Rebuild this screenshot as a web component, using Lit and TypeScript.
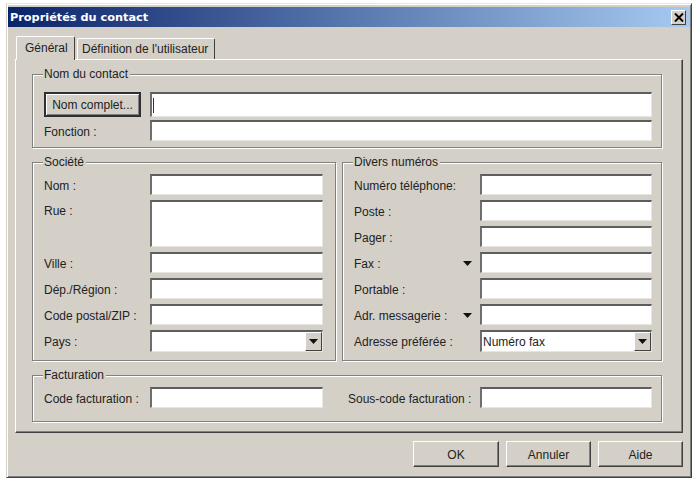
import { LitElement, html, css } from 'lit';
import { customElement } from 'lit/decorators.js';

const arrow = html`<svg width="9" height="5" viewBox="0 0 9 5"><path d="M0 0h9L4.5 5z" fill="#111" /></svg>`;

@customElement('app-root')
export class AppRoot extends LitElement {
  static styles = css`
    :host {
      display: block;
      width: 695px;
      height: 481px;
      box-sizing: border-box;
      padding: 3px 3px 3px 6px;
      background: #fff;
      font-family: 'Liberation Sans', Arial, sans-serif;
      font-size: 12px;
      color: #222;
    }
    * {
      box-sizing: border-box;
    }
    .window {
      height: 475px;
      padding: 3px 1px 1px;
      background: #d4d0c8;
      border: 1px solid;
      border-color: #e8e6e0 #404040 #404040 #d4d0c8;
      box-shadow: inset 1px 1px 0 #fff, inset -1px -1px 0 #808080;
    }
    .title {
      display: flex;
      align-items: center;
      justify-content: space-between;
      height: 20px;
      padding: 0 4px 0 2px;
      background: linear-gradient(90deg, #0a246a, #a6caf0);
      color: #fff;
      font-family: 'DejaVu Sans', sans-serif;
      font-size: 11.3px;
      font-weight: bold;
    }
    .close {
      display: flex;
      align-items: center;
      justify-content: center;
      width: 15px;
      height: 15px;
      background: #d4d0c8;
      border: 1px solid;
      border-color: #fff #404040 #404040 #fff;
    }
    .body {
      padding: 9px 7px 0;
    }
    .tabs {
      display: flex;
      align-items: flex-end;
      gap: 2px;
      height: 23px;
      padding-left: 1px;
    }
    .tab {
      position: relative;
      height: 21px;
      padding: 3px 6px 0 4px;
      background: #d4d0c8;
      border: solid;
      border-width: 1px 1px 0 1px;
      border-color: #fff #404040 #fff #fff;
      border-radius: 2px 2px 0 0;
      white-space: nowrap;
    }
    .tab.active {
      z-index: 1;
      width: 59px;
      height: 24px;
      margin-bottom: -1px;
      padding: 4px 0 0 8px;
    }
    .panel {
      height: 374px;
      padding: 14px 20px 0 16px;
      background: #d4d0c8;
      border: 1px solid;
      border-color: #fff #404040 #404040 #fff;
      box-shadow: inset -1px -1px 0 #808080;
    }
    .group {
      position: relative;
      border: 1px solid #808080;
      box-shadow: 1px 1px 0 #fff, inset 1px 1px 0 #fff;
    }
    .legend {
      position: absolute;
      top: -8px;
      left: 10px;
      padding: 0 2px 0 1px;
      background: #d4d0c8;
      line-height: 15px;
    }
    .contact {
      display: grid;
      grid-template-columns: 106px 1fr;
      grid-template-rows: 25px 21px;
      row-gap: 3px;
      align-items: center;
      height: 74px;
      padding: 17px 9px 0 11px;
    }
    .columns {
      display: flex;
      gap: 6px;
      margin-top: 14px;
    }
    .columns .group {
      height: 199px;
      padding: 11px 12px 0 11px;
    }
    .societe {
      width: 304px;
    }
    .divers {
      width: 320px;
    }
    .columns .divers {
      padding-right: 9px;
    }
    .rows {
      display: grid;
      row-gap: 5px;
      align-items: center;
    }
    .societe .rows {
      grid-template-columns: 106px 173px;
      grid-template-rows: 21px 47px repeat(3, 21px) 22px;
    }
    .divers .rows {
      grid-template-columns: 126px 172px;
      grid-template-rows: repeat(6, 21px) 22px;
    }
    .billing {
      display: grid;
      grid-template-columns: 106px 173px 25px 132px 172px;
      grid-template-rows: 21px;
      align-items: center;
      height: 47px;
      margin-top: 14px;
      padding: 11px 9px 0 11px;
    }
    .billing .spacer {
      grid-column: 3;
    }
    label {
      display: flex;
      align-items: center;
      justify-content: space-between;
      padding: 2px 8px 0 0;
      white-space: nowrap;
    }
    label.top {
      align-self: start;
      padding-top: 4px;
    }
    .field {
      display: flex;
      align-items: center;
      height: 100%;
      padding-left: 1px;
      background: #fff;
      border: solid;
      border-width: 2px 1px 1px 2px;
      border-color: #5e5e5e #e8e6e0 #e8e6e0 #6e6e6e;
      overflow: hidden;
    }
    .caret {
      width: 1px;
      height: 15px;
      background: #333;
    }
    .select {
      justify-content: space-between;
      padding-right: 0;
    }
    .drop {
      display: flex;
      align-items: center;
      justify-content: center;
      width: 17px;
      height: 100%;
      background: #d4d0c8;
      border: 1px solid;
      border-color: #fff #404040 #404040 #fff;
    }
    .default {
      display: flex;
      align-items: center;
      justify-content: center;
      width: 97px;
      height: 25px;
      background: #d4d0c8;
      border: 2px solid #303030;
      box-shadow: inset 1px 1px 0 #fff, inset -1px -1px 0 #808080;
    }
    .footer {
      display: flex;
      justify-content: flex-end;
      gap: 7px;
      margin-top: 8px;
    }
    .btn {
      display: flex;
      align-items: center;
      justify-content: center;
      width: 85px;
      height: 26px;
      padding-top: 1px;
      background: #d4d0c8;
      border: 1px solid;
      border-color: #fff #404040 #404040 #fff;
      box-shadow: inset -1px -1px 0 #808080;
    }
    .btn.ok {
      width: 86px;
    }
  `;

  render() {
    return html`
      <div class="window">
        <div class="title">
          <span>Propriétés du contact</span>
          <div class="close">
            <svg width="10" height="9" viewBox="0 0 10 9">
              <path d="M1 0.5l8 8M9 0.5l-8 8" stroke="#000" stroke-width="2" />
            </svg>
          </div>
        </div>
        <div class="body">
          <div class="tabs">
            <div class="tab active">Général</div>
            <div class="tab">Définition de l'utilisateur</div>
          </div>
          <div class="panel">
            <div class="group contact">
              <span class="legend">Nom du contact</span>
              <div class="default">Nom complet...</div>
              <div class="field"><span class="caret"></span></div>
              <label>Fonction :</label>
              <div class="field"></div>
            </div>
            <div class="columns">
              <div class="group societe">
                <span class="legend">Société</span>
                <div class="rows">
                  <label>Nom :</label>
                  <div class="field"></div>
                  <label class="top">Rue :</label>
                  <div class="field"></div>
                  <label>Ville :</label>
                  <div class="field"></div>
                  <label>Dép./Région :</label>
                  <div class="field"></div>
                  <label>Code postal/ZIP :</label>
                  <div class="field"></div>
                  <label>Pays :</label>
                  <div class="field select">
                    <span></span>
                    <div class="drop">${arrow}</div>
                  </div>
                </div>
              </div>
              <div class="group divers">
                <span class="legend">Divers numéros</span>
                <div class="rows">
                  <label>Numéro téléphone:</label>
                  <div class="field"></div>
                  <label>Poste :</label>
                  <div class="field"></div>
                  <label>Pager :</label>
                  <div class="field"></div>
                  <label>Fax : ${arrow}</label>
                  <div class="field"></div>
                  <label>Portable :</label>
                  <div class="field"></div>
                  <label>Adr. messagerie : ${arrow}</label>
                  <div class="field"></div>
                  <label>Adresse préférée :</label>
                  <div class="field select">
                    <span>Numéro fax</span>
                    <div class="drop">${arrow}</div>
                  </div>
                </div>
              </div>
            </div>
            <div class="group billing">
              <span class="legend">Facturation</span>
              <label>Code facturation :</label>
              <div class="field"></div>
              <span class="spacer"></span>
              <label>Sous-code facturation :</label>
              <div class="field"></div>
            </div>
          </div>
          <div class="footer">
            <div class="btn ok">OK</div>
            <div class="btn">Annuler</div>
            <div class="btn">Aide</div>
          </div>
        </div>
      </div>
    `;
  }
}
